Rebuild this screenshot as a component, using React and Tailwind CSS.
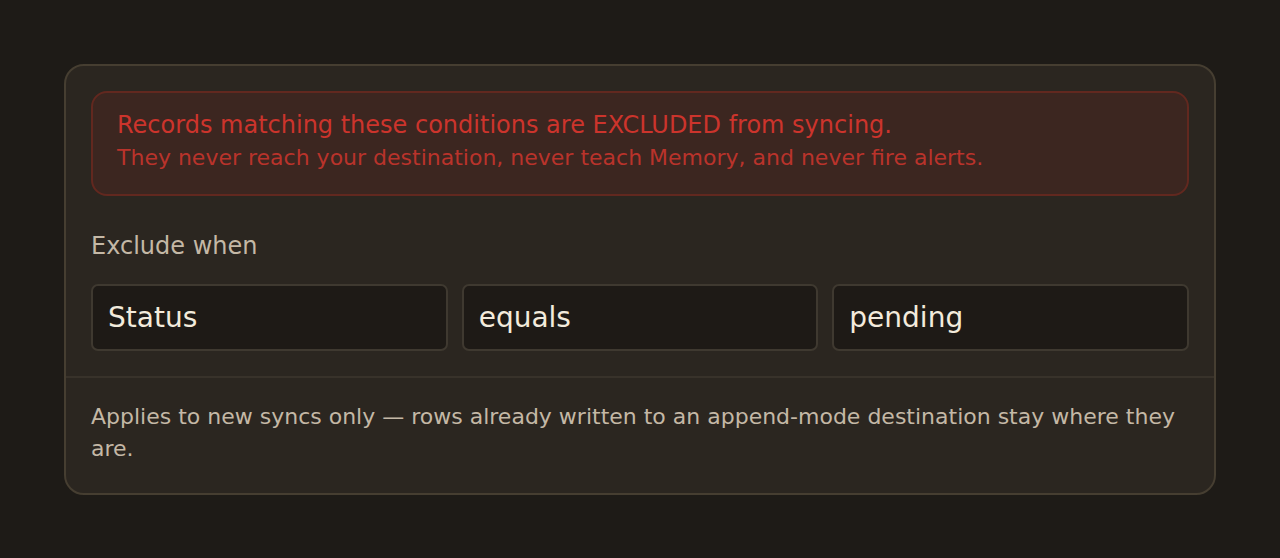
import React from 'react';

const Field = ({ value }) => (
  <div className="flex-1 h-[67px] flex items-center px-[15px] bg-[#1e1a16] border-2 border-[#3f3930] rounded-[7px] text-[28px] text-[#f3ebdc]">
    {value}
  </div>
);

const App = () => {
  return (
    <div className="min-h-[558px] bg-[#1e1b17] pt-[64px] px-[64px]" style={{ fontFamily: '"DejaVu Sans", sans-serif' }}>
      <div className="w-[1152px] bg-[#2b2620] border-2 border-[#463e31] rounded-[20px]">
        <div className="px-[25px] pt-[25px] pb-[25px]">
          {/* warning banner */}
          <div className="bg-[#3c2620] border-2 border-[#62281f] rounded-[16px] px-[24px] pt-[18px] pb-[23px]">
            <div className="text-[24px] leading-[28px] text-[#cc342c]">
              Records matching these conditions are EXCLUDED from syncing.
            </div>
            <div className="mt-[6px] text-[22px] leading-[26px] text-[#b9332b]">
              They never reach your destination, never teach Memory, and never fire alerts.
            </div>
          </div>

          <div className="mt-[35px] text-[24px] leading-[30px] text-[#c4b8a6]">Exclude when</div>

          <div className="mt-[23px] flex gap-[14px]">
            <Field value="Status" />
            <Field value="equals" />
            <Field value="pending" />
          </div>
        </div>
        <div className="border-t-2 border-[#38322a] px-[25px] pt-[23px] pb-[28px] text-[22px] leading-[32px] text-[#c4b8a6]">
          Applies to new syncs only — rows already written to an append-mode destination stay where they are.
        </div>
      </div>
    </div>
  );
};

export default App;
